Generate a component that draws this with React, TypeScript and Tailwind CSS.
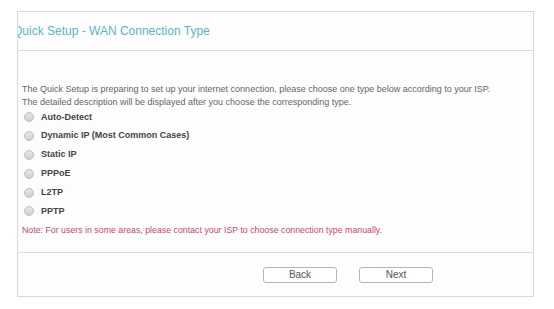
const options = [
  'Auto-Detect',
  'Dynamic IP (Most Common Cases)',
  'Static IP',
  'PPPoE',
  'L2TP',
  'PPTP',
];

function Radio() {
  return (
    <span className="inline-block size-[10px] rounded-full border border-[#bcbcbc] bg-gradient-to-b from-[#e6e6e6] to-[#d0d0d0]" />
  );
}

export default function App() {
  return (
    <div className="w-[554px] h-[309px] bg-white pt-[11px] pl-[17px] font-['Liberation_Sans',Arial,sans-serif]">
      <div className="w-[517px] h-[286px] border border-[#d9d9d9] bg-[#fdfdfd] overflow-hidden flex flex-col">
        {/* Header */}
        <div className="h-[39px] shrink-0 border-b border-[#dcdcdc] flex items-center">
          <h2 className="-ml-[5px] text-[12px] text-[#5ab6c6] leading-none">Quick Setup - WAN Connection Type</h2>
        </div>

        {/* Body */}
        <div className="flex-1 pt-[32px] pl-[4px] text-[9px] text-[#666]">
          <p className="leading-[12.5px]">
            The Quick Setup is preparing to set up your internet connection, please choose one type below according to your ISP.
          </p>
          <p className="leading-[12.5px]">
            The detailed description will be displayed after you choose the corresponding type.
          </p>
          <div>
            {options.map((opt) => (
              <label key={opt} className="flex items-center h-[18.8px]">
                <span className="w-[19px] pl-[2px] flex items-center">
                  <Radio />
                </span>
                <span className="font-bold text-[#444]">{opt}</span>
              </label>
            ))}
          </div>
          <p className="leading-[18.8px] text-[8.8px] text-[#c64b66]">
            Note: For users in some areas, please contact your ISP to choose connection type manually.
          </p>
        </div>

        {/* Footer */}
        <div className="h-[44px] shrink-0 border-t border-[#dcdcdc] flex items-start pt-[14px] pl-[245px] gap-[22px]">
          <button className="w-[74px] h-[16px] rounded-[3px] border border-[#b5b5b5] bg-white text-[10px] text-[#555] leading-none">
            Back
          </button>
          <button className="w-[74px] h-[16px] rounded-[3px] border border-[#b5b5b5] bg-white text-[10px] text-[#555] leading-none">
            Next
          </button>
        </div>
      </div>
    </div>
  );
}
